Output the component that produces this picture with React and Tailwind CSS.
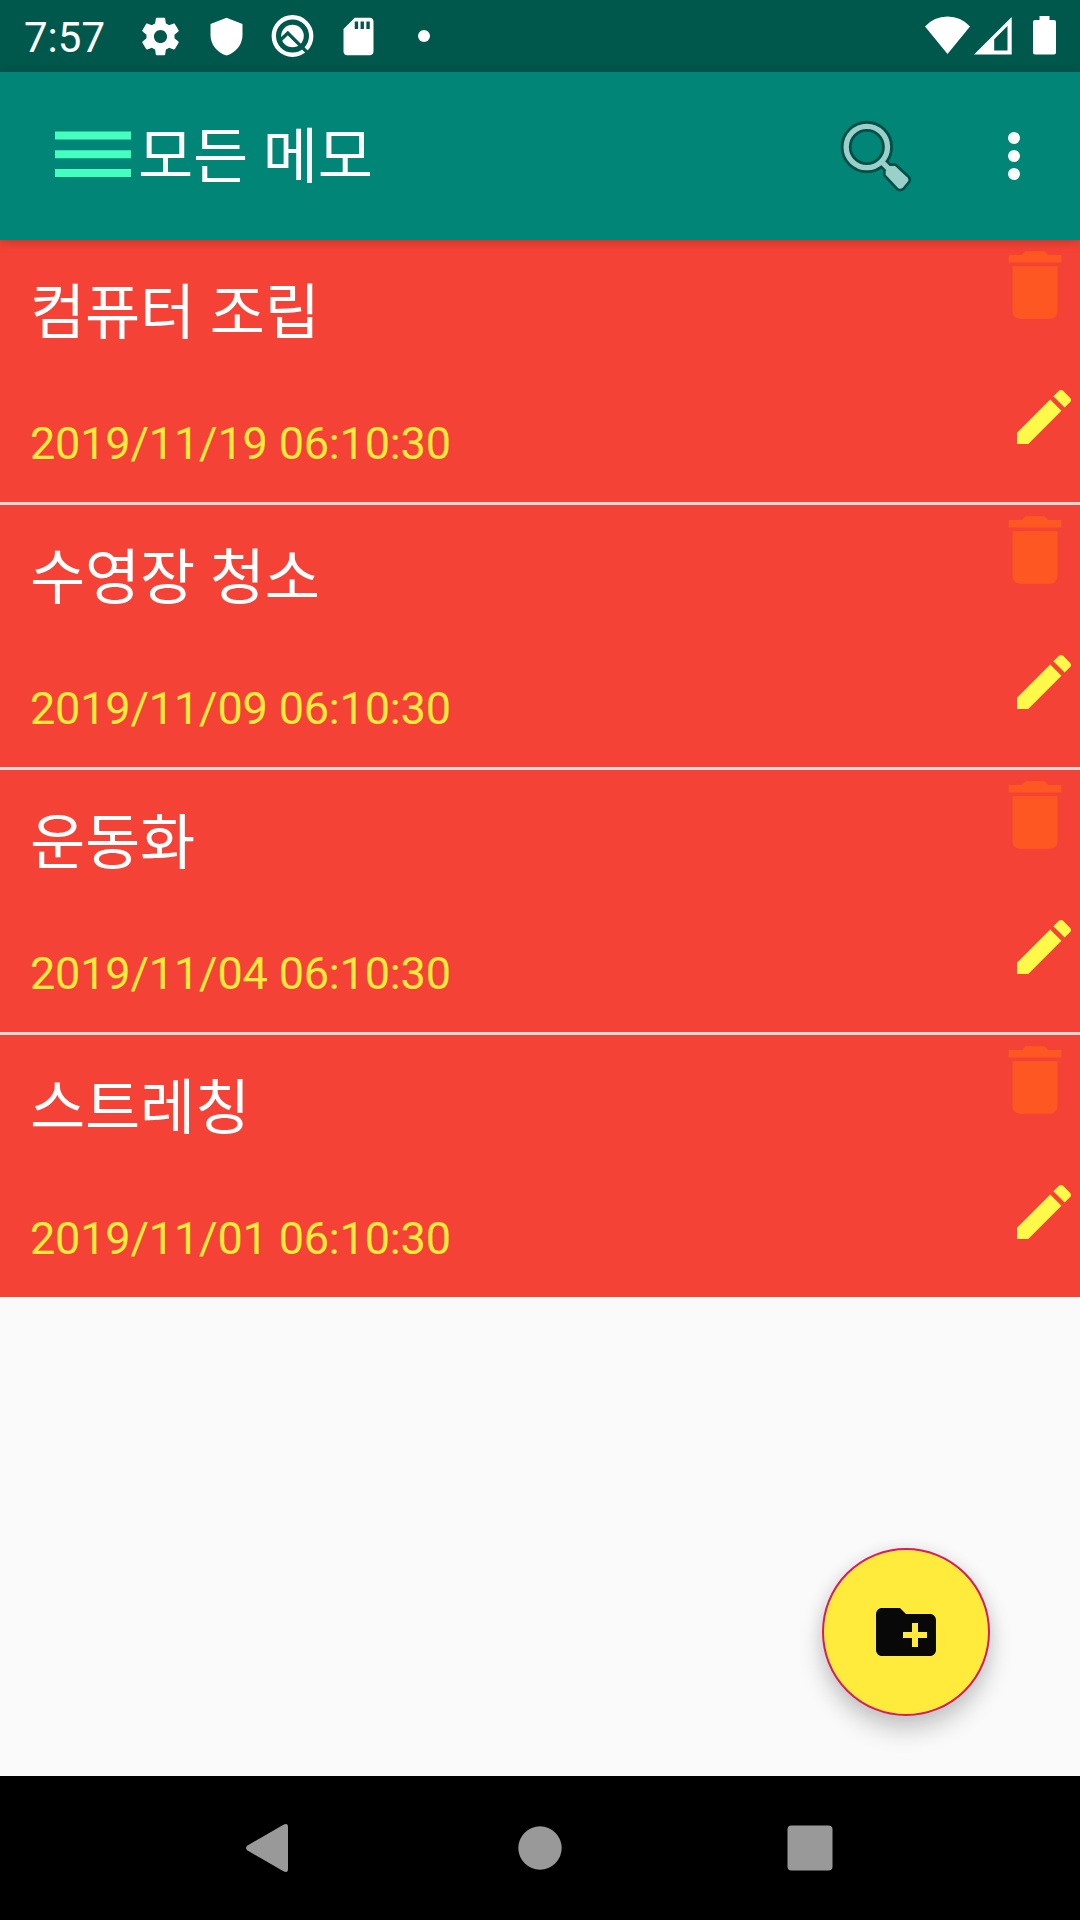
import React from "react";

const memos = [
  { title: "컴퓨터 조립", date: "2019/11/19 06:10:30" },
  { title: "수영장 청소", date: "2019/11/09 06:10:30" },
  { title: "운동화", date: "2019/11/04 06:10:30" },
  { title: "스트레칭", date: "2019/11/01 06:10:30" },
];

const StatusBar = () => (
  <div className="flex h-[72px] items-center justify-between bg-[#00574b] text-white">
    <div className="flex items-center pl-6">
      <span className="w-[113.5px] pt-[3px] text-[42px] leading-[72px]">7:57</span>
      <div className="flex items-center gap-[21px]">
        <svg className="size-[45px]" viewBox="0 0 24 24" fill="currentColor">
          <path d="M19.43 12.98c.04-.32.07-.64.07-.98s-.03-.66-.07-.98l2.11-1.65c.19-.15.24-.42.12-.64l-2-3.46c-.12-.22-.39-.3-.61-.22l-2.49 1c-.52-.4-1.08-.73-1.69-.98l-.38-2.65C14.46 2.18 14.25 2 14 2h-4c-.25 0-.46.18-.49.42l-.38 2.65c-.61.25-1.17.59-1.69.98l-2.49-1c-.23-.09-.49 0-.61.22l-2 3.46c-.13.22-.07.49.12.64l2.11 1.65c-.04.32-.07.65-.07.98s.03.66.07.98l-2.11 1.65c-.19.15-.24.42-.12.64l2 3.46c.12.22.39.3.61.22l2.49-1c.52.4 1.08.73 1.69.98l.38 2.65c.03.24.24.42.49.42h4c.25 0 .46-.18.49-.42l.38-2.65c.61-.25 1.17-.59 1.69-.98l2.49 1c.23.09.49 0 .61-.22l2-3.46c.12-.22.07-.49-.12-.64l-2.11-1.65zM12 15.5c-1.93 0-3.5-1.57-3.5-3.5s1.57-3.5 3.5-3.5 3.5 1.57 3.5 3.5-1.57 3.5-3.5 3.5z" />
        </svg>
        <svg className="size-[45px]" viewBox="0 0 45 45" fill="currentColor">
          <path d="M22.5 3.8 38.5 10v11c0 9-6 17.500-16 20.500-10-3-16-11.500-16-20.500V10z" />
        </svg>
        <svg className="size-[45px]" viewBox="0 0 45 45" fill="none">
          <circle cx="22.500" cy="22" r="18.700" stroke="currentColor" strokeWidth="4.400" />
          <circle cx="22.500" cy="22" r="11.300" fill="currentColor" />
          <path d="M10.500 26 17.800 19 38 39.200" stroke="#00574b" strokeWidth="3.300" />
        </svg>
        <svg className="size-[45px]" viewBox="0 0 24 24" fill="currentColor">
          <path d="M18 2h-8L4 8v12c0 1.100.9 2 2 2h12c1.100 0 2-.9 2-2V4c0-1.100-.9-2-2-2zm-6.200 6H10V4h1.800v4zm3.100 0h-1.800V4h1.800v4zm3.100 0h-1.800V4H18v4z" />
        </svg>
        <div className="flex w-[45px] justify-center">
          <span className="size-3 rounded-full bg-white" />
        </div>
      </div>
    </div>
    <svg className="h-[72px] w-[160px]" viewBox="920 0 160 72" fill="currentColor">
      <path d="M947.500 54 925 26.500Q934 16.500 947.500 16.500T970 26.500z" />
      <path fillRule="evenodd" d="M974 54.500h37.700V17zM994.200 50.500V39.300L1007.500 26v24.500z" />
      <path d="M1039.500 16h10v4h4.500a2 2 0 0 1 2 2v30.500a2 2 0 0 1-2 2h-19a2 2 0 0 1-2-2V22a2 2 0 0 1 2-2h4.500z" />
    </svg>
  </div>
);

const SearchIcon = () => (
  <svg className="size-[76px]" viewBox="60 84 228 228" strokeLinejoin="round">
    <g fill="none" stroke="#004f47">
      <circle cx="140.500" cy="171" r="62" strokeWidth="33" />
      <path d="M184 214 206 236" strokeWidth="31" />
      <path d="M211 228h14l38 35q5 6 0 12l-15 18q-6 5-13 2l-38-41v-11z" strokeWidth="16" />
    </g>
    <circle cx="140.500" cy="171" r="62" fill="none" stroke="#9bd0ca" strokeWidth="16" />
    <path d="M184 214 208 238" stroke="#9bd0ca" strokeWidth="16" />
    <path d="M211 228h14l38 35q5 6 0 12l-15 18q-6 5-13 2l-38-41v-11z" fill="#9bd0ca" />
  </svg>
);

const Toolbar = () => (
  <header className="relative z-10 flex h-[168px] items-center bg-[#008577] pl-[55px] text-white shadow-[0_2px_10px_rgba(0,0,0,0.22)]">
    <svg className="mb-1 h-[46px] w-[76px]" viewBox="0 0 76 46" fill="#46ffbe">
      <path d="M0 .4h76v8H0zM0 19.200h76v8H0zM0 38h76v8H0z" />
    </svg>
    <h1 className="mt-1 ml-[7px] text-[60px] leading-[72px] tracking-[-0.2px]">모든 메모</h1>
    <div className="ml-auto flex items-center pr-[60px]">
      <SearchIcon />
      <div className="ml-[92px] flex flex-col gap-1.5">
        <span className="size-3 rounded-full bg-white" />
        <span className="size-3 rounded-full bg-white" />
        <span className="size-3 rounded-full bg-white" />
      </div>
    </div>
  </header>
);

const MemoItem = ({ title, date }) => (
  <li className="flex h-[262px] justify-between bg-[#f44336]">
    <div className="flex flex-col pl-[30px]">
      <h2 className="mt-[38px] text-[60px] leading-[72px] tracking-[-0.2px] text-white">{title}</h2>
      <p className="mt-[67px] text-[45px] leading-[54px] tracking-[-0.18px] text-[#ffeb3b]">{date}</p>
    </div>
    <div className="flex flex-col items-end">
      <svg className="size-[90px]" viewBox="0 0 24 24" fill="#ff5722">
        <path d="M6 19c0 1.100.9 2 2 2h8c1.100 0 2-.9 2-2V7H6v12zM19 4h-3.500l-1-1h-5l-1 1H5v2h14V4z" />
      </svg>
      <svg className="mt-[51px] size-[72px]" viewBox="0 0 24 24" fill="#fff94a">
        <path d="M3 17.250V21h3.750L17.810 9.940l-3.750-3.750L3 17.250zM20.710 7.040c.39-.39.39-1.020 0-1.410l-2.340-2.340c-.39-.39-1.020-.39-1.410 0l-1.830 1.830 3.750 3.750 1.830-1.830z" />
      </svg>
    </div>
  </li>
);

const NavBar = () => (
  <nav className="flex h-[144px] items-center justify-center bg-black">
    <svg className="h-[50px] w-[590px]" viewBox="245 1823 590 50" fill="#999">
      <path d="M247.500 1845.500 283 1825Q288 1822.500 288 1827v42Q288 1873.500 283 1871L247.500 1850.500Q244.500 1848 247.500 1845.500z" />
      <circle cx="540" cy="1848" r="21.700" />
      <rect x="787.500" y="1825.500" width="45" height="45" rx="4" />
    </svg>
  </nav>
);

const App = () => (
  <div className="flex h-[1920px] w-[1080px] flex-col overflow-hidden bg-[#fafafa] font-['Roboto','Noto_Sans_CJK_KR',sans-serif]">
    <StatusBar />
    <Toolbar />
    <main className="relative flex-1">
      <ul className="flex flex-col gap-[3px] bg-[#dadada]">
        {memos.map((memo) => (
          <MemoItem key={memo.date} title={memo.title} date={memo.date} />
        ))}
      </ul>
      <button className="absolute right-[90px] bottom-[60px] flex size-[168px] items-center justify-center rounded-full border-2 border-[#d81b60] bg-[#ffeb3b] shadow-[0_14px_24px_rgba(0,0,0,0.2),0_0_16px_rgba(0,0,0,0.08)]">
        <svg className="size-[72px]" viewBox="0 0 24 24" fill="#080808">
          <path d="M20 6h-8l-2-2H4c-1.110 0-1.990.89-1.990 2L2 18c0 1.110.89 2 2 2h16c1.110 0 2-.89 2-2V8c0-1.110-.89-2-2-2zm-1 8h-3v3h-2v-3h-3v-2h3V9h2v3h3v2z" />
        </svg>
      </button>
    </main>
    <NavBar />
  </div>
);

export default App;
